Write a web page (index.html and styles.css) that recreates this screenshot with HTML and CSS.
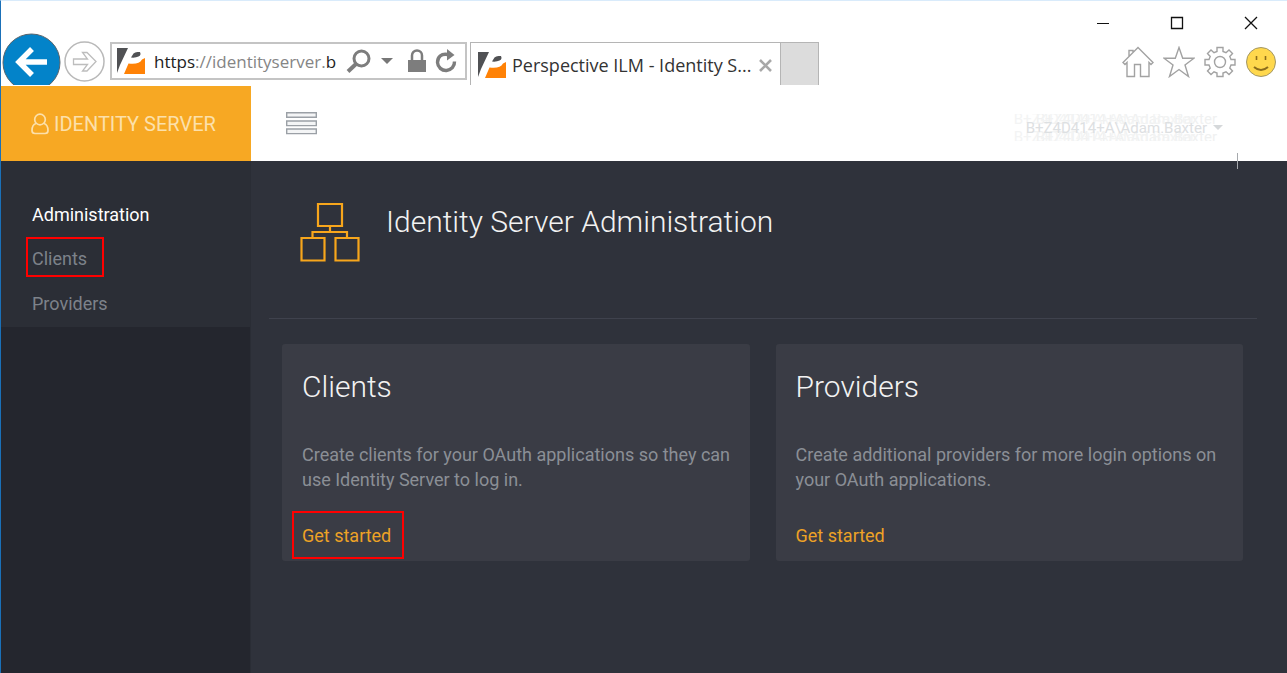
FILE: index.html
```html
<!DOCTYPE html>
<html lang="en">
<head>
<meta charset="utf-8">
<title>Perspective ILM - Identity Server</title>
<link rel="stylesheet" href="styles.css">
</head>
<body>
<div class="window">
  <div class="chrome">
    <div class="caption">
      <button class="icon-btn" aria-label="Minimize"><svg width="14" height="14" viewBox="0 0 14 14"><path d="M1 7.5h12" stroke="#111" fill="none"/></svg></button>
      <button class="icon-btn" aria-label="Maximize"><svg width="14" height="14" viewBox="0 0 14 14"><path d="M1.5 1.5h11v11h-11z" stroke="#111" stroke-width="1.3" fill="none"/></svg></button>
      <button class="icon-btn" aria-label="Close"><svg width="14" height="14" viewBox="0 0 14 14"><path d="M1 1l12 12M13 1L1 13" stroke="#111" stroke-width="1.3" fill="none"/></svg></button>
    </div>
    <div class="toolbar">
      <button class="icon-btn back" aria-label="Back"><svg width="59" height="59" viewBox="0 0 59 59"><circle cx="29.5" cy="29.5" r="28.5" fill="#0383c9" stroke="#59646c" stroke-width="1"/><path d="M45 29H18M30 16L17 29l13 13" fill="none" stroke="#fff" stroke-width="5.500"/></svg></button>
      <button class="icon-btn forward" aria-label="Forward"><svg width="41" height="41" viewBox="0 0 41 41"><circle cx="20.500" cy="20.500" r="19.500" fill="#fff" stroke="#b9b9b9" stroke-width="1.500"/><path d="M9.500 18h14l-5-6.500h4.500L32 20.500 23 30h-4.500l5-6.500h-14z" fill="none" stroke="#bdbdbd" stroke-width="1.300"/></svg></button>
      <div class="address">
        <svg class="favicon" width="28" height="27" viewBox="0 0 28 27"><path d="M0 0h11L3 17 0 25z" fill="#505154"/><path d="M14 9.500l2.500-4Q18 4 20.500 4H23q1.500 3-1.500 4.500-3 1.500-7.500 1z" fill="#505154"/><path d="M7 26l4.500-10.500Q22 17 25 11.500l3-1.500v16z" fill="#ff8206"/></svg>
        <div class="url"><b>https</b>://identityserver.<b>b</b></div>
        <button class="icon-btn" aria-label="Search"><svg width="26" height="26" viewBox="0 0 26 26" fill="none" stroke="#7d7d7d"><circle cx="15.500" cy="10.500" r="7.500" stroke-width="3"/><path d="M10 16l-8 7.500" stroke-width="4"/></svg></button>
        <button class="icon-btn" aria-label="Address history"><svg width="12" height="8" viewBox="0 0 12 8"><path d="M0 1h12L6 7z" fill="#777"/></svg></button>
        <button class="icon-btn lock" aria-label="Security report"><svg width="18" height="24" viewBox="0 0 18 24"><path d="M4 12V6.500a5 5 0 0 1 10 0V12" fill="none" stroke="#7d7d7d" stroke-width="2.500"/><path d="M0 11h18v12H0z" fill="#7d7d7d"/></svg></button>
        <button class="icon-btn" aria-label="Refresh"><svg width="22" height="25" viewBox="0 0 22 25"><path d="M13 5.500C6 4 2.500 8.500 2.500 13.500a8.300 8.300 0 0 0 17-1" fill="none" stroke="#7d7d7d" stroke-width="3.400"/><path d="M12 0l7.500 6L12 11.500z" fill="#7d7d7d"/></svg></button>
      </div>
      <div class="tab">
        <svg class="favicon" width="28" height="27" viewBox="0 0 28 27"><path d="M0 0h11L3 17 0 25z" fill="#505154"/><path d="M14 9.500l2.500-4Q18 4 20.500 4H23q1.500 3-1.500 4.500-3 1.500-7.500 1z" fill="#505154"/><path d="M7 26l4.500-10.500Q22 17 25 11.500l3-1.500v16z" fill="#ff8206"/></svg>
        <span class="tab-title">Perspective ILM - Identity S...</span>
        <button class="icon-btn" aria-label="Close tab"><svg width="13" height="13" viewBox="0 0 13 13"><path d="M1 1l11 11M12 1L1 12" stroke="#a8a8a8" stroke-width="2.600"/></svg></button>
      </div>
      <button class="new-tab" aria-label="New tab"></button>
      <div class="tools">
        <button class="icon-btn" aria-label="Home"><svg width="32" height="32" viewBox="0 0 32 32"><path d="M16 1.500L1 16.500l2 2 2-2V30.500h7.500v-12h6v12H27v-14l2 2 2-2zM7 10V4.500h4V6" fill="none" stroke="#a2a2a2" stroke-width="1.400"/></svg></button>
        <button class="icon-btn" aria-label="Favorites"><svg width="32" height="32" viewBox="0 0 32 32"><path d="M16 1.500l3.700 10.700H31l-9 6.800 3.500 11.500L16 23.500 6.500 30.500 10 19 1 12.200h11.300z" fill="none" stroke="#a2a2a2" stroke-width="1.400"/></svg></button>
        <button class="icon-btn" aria-label="Settings"><svg width="32" height="32" viewBox="0 0 32 32" fill="none" stroke="#a2a2a2" stroke-width="1.400"><path d="M13 1.500h6v4l3 1.200 3-2.700 3.500 3.500-2.700 3 1.200 3h4v5.500h-4l-1.200 3 2.700 3L25 28.500l-3-2.700-3 1.200v3.500h-6V27l-3-1.200-3 2.700L3.500 25l2.700-3L5 19H1v-5.500h4l1.200-3-2.700-3L7 4l3 2.700 3-1.200z"/><circle cx="16" cy="16" r="5.500"/></svg></button>
        <button class="icon-btn" aria-label="Send a smile"><svg width="32" height="32" viewBox="0 0 32 32"><circle cx="16" cy="16" r="14.500" fill="#ffd84d" stroke="#a39766"/><path d="M11.500 10v4M20.500 10v4" stroke="#8c6d1c" stroke-width="1.600"/><path d="M9 21q7 6 14 0" fill="none" stroke="#8c6d1c" stroke-width="2"/></svg></button>
      </div>
    </div>
  </div>

  <header class="topbar">
    <a class="brand" href="#"><svg width="18" height="22" viewBox="0 0 18 22" fill="none" stroke="#fce0ab" stroke-width="1.700"><circle cx="9" cy="6.500" r="5.300"/><path d="M5 10.500C2 11.500 1 14 1 17.500 1 19.500 2 20.500 4 20.500h10c2 0 3-1 3-3 0-3.500-1-6-4-7"/></svg><span>IDENTITY SERVER</span></a>
    <button class="icon-btn menu" aria-label="Toggle menu"><svg width="31" height="23" viewBox="0 0 31 23" fill="#f4f5f6" stroke="#9ba0a6" stroke-width="1.400"><path d="M.7.7h29.600v4.600H.7zM.7 9h29.600v4.600H.7zM.7 17h29.600v4.600H.7z"/></svg></button>
    <button class="user">B+Z4D414+A\Adam.Baxter <svg class="caret" width="10" height="5" viewBox="0 0 10 5"><path d="M0 0h10L5 5z" fill="#d5d8da"/></svg></button>
    <span class="cursor"></span>
  </header>

  <div class="body">
    <nav class="sidebar">
      <ul class="nav">
        <li class="nav-title">Administration</li>
        <li><a class="nav-link marked" href="#">Clients</a></li>
        <li><a class="nav-link" href="#">Providers</a></li>
      </ul>
    </nav>
    <main class="main">
      <div class="heading">
        <svg width="60" height="60" viewBox="0 0 60 60" fill="none" stroke="#f7a61c" stroke-width="2.200"><path d="M18 2h24v22H18zM1.500 36h23v22.500h-23zM35.500 36h23v22.500h-23zM30 24v6M12.500 36v-6h34.500v6"/></svg>
        <h1>Identity Server Administration</h1>
      </div>
      <div class="cards">
        <section class="card">
          <h2>Clients</h2>
          <p>Create clients for your OAuth applications so they can use Identity Server to log in.</p>
          <a class="start marked" href="#">Get started</a>
        </section>
        <section class="card">
          <h2>Providers</h2>
          <p>Create additional providers for more login options on your OAuth applications.</p>
          <a class="start" href="#">Get started</a>
        </section>
      </div>
    </main>
  </div>
</div>
</body>
</html>
```
FILE: styles.css
```css
* { box-sizing: border-box; }
body { margin: 0; font-family: Roboto, "Liberation Sans", sans-serif; font-size: 18px; background: #fff; }
button { font: inherit; border: 0; padding: 0; background: none; }
a { text-decoration: none; }
svg { display: block; flex: none; }
.window { min-height: 100vh; display: flex; flex-direction: column; border-left: 1px solid #1a70b8; border-top: 1px solid #d9ebfb; }

.chrome { font-family: "Open Sans", "Noto Sans", sans-serif; background: #fff; padding-bottom: 1px; }
.caption { display: flex; justify-content: flex-end; gap: 60px; height: 32px; padding: 12px 29px 0 0; }
.toolbar { display: flex; align-items: flex-start; height: 52px; overflow: hidden; padding-left: 1px; }
.forward { margin: 8px 5px 0 3px; }
.address { display: flex; align-items: center; width: 357px; height: 38px; margin: 9px 3px 0 0; padding: 0 8px 0 5px; border: 2px solid #c4c4c4; gap: 9px; }
.url { flex: 1; white-space: nowrap; font-size: 17px; color: #858585; }
.url b { font-weight: 400; color: #222; }
.lock { margin-left: 6px; }
.tab { display: flex; align-items: center; width: 311px; height: 43px; margin-top: 9px; padding: 2px 8px 0 7px; border: 1px solid #b5b5b5; border-bottom: 0; color: #333; gap: 6px; }
.tab-title { flex: 1; white-space: nowrap; }
.new-tab { width: 38px; height: 43px; margin-top: 9px; background: #dcdcdc; border: 1px solid #b5b5b5; border-width: 1px 1px 0 0; }
.tools { display: flex; gap: 9px; margin: 13px 10px 0 auto; }

.topbar { position: relative; display: flex; align-items: center; height: 75px; background: #fff; }
.brand { display: flex; align-items: center; gap: 5px; width: 250px; height: 75px; padding-left: 30px; background: #f7a823; color: #fce0ab; font-size: 20px; }
.menu { margin-left: 35px; }
.user { display: flex; align-items: center; gap: 6px; margin: 8px 42px 0 auto; padding: 0 22px 0 14px; height: 27px; overflow: hidden; color: #dde0e2; font-size: 15px; white-space: nowrap; text-shadow: -12px 9px #f3f4f4, -12px -9px #f3f4f4, 10px 9px #f0f1f1, 10px -9px #f0f1f1; }
.cursor { position: absolute; right: 49px; bottom: -8px; width: 1px; height: 16px; background: #a6a9ad; }

.body { flex: 1; display: flex; background: #2f323b; }
.sidebar { width: 250px; background: #24262e; border-right: 1px solid #2a2d35; }
.nav { list-style: none; margin: 0; padding: 31px 0 0; background: #2b2e36; }
.nav li { display: flex; align-items: flex-start; height: 45px; padding-left: 25px; line-height: 45px; color: #fff; }
.nav .nav-title { padding-left: 31px; }
.nav-link { height: 40px; line-height: 40px; padding: 0 15px 0 4px; border: 2px solid transparent; color: #7d828a; }
.main { flex: 1; padding: 41px 30px 40px 18px; }
.heading { display: flex; align-items: flex-start; gap: 26px; height: 117px; padding-left: 31px; border-bottom: 1px solid #3f424d; }
h1, h2 { margin: 0; font-size: 30px; line-height: 40px; font-weight: 300; color: #f2f2f2; }
.cards { display: grid; grid-template-columns: 1fr 1fr; gap: 26px; padding: 25px 14px 0 13px; }
.card { padding: 23px 12px 2px 20px; background: #3a3c45; border-radius: 3px; }
.card p { margin: 35px 0 19px; line-height: 25px; color: #8b8f96; }
.start { display: inline-block; height: 48px; line-height: 46px; margin-left: -10px; padding: 0 11px 0 8px; border: 2px solid transparent; color: #eda226; vertical-align: top; }
.marked { border-color: #f00; }
```
